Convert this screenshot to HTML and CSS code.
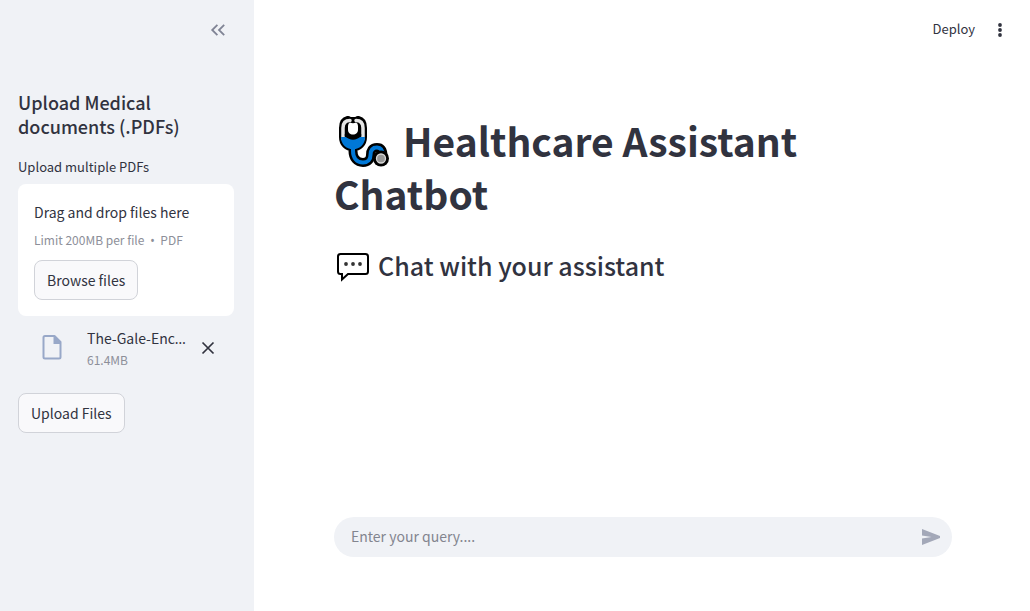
FILE: index.html
```html
<!DOCTYPE html>
<html lang="en">
<head>
<meta charset="utf-8">
<meta name="viewport" content="width=device-width, initial-scale=1">
<title>Healthcare Assistant Chatbot</title>
<link rel="stylesheet" href="styles.css">
</head>
<body>
<div class="app">
  <aside class="sidebar">
    <div class="sidebar-header">
      <button class="icon-button collapse" type="button" aria-label="Collapse sidebar">
        <svg width="16" height="14" viewBox="0 0 16 14" fill="none" stroke="currentColor" stroke-width="1.8"><path d="M7.4 1.8 2.200 7l5.200 5.200M14.200 1.800 9 7l5.200 5.200"/></svg>
      </button>
    </div>
    <h2 class="sidebar-title">Upload Medical documents (.PDFs)</h2>
    <label class="field-label" for="browse">Upload multiple PDFs</label>
    <section class="dropzone">
      <span class="drop-title">Drag and drop files here</span>
      <span class="drop-hint">Limit 200MB per file <span class="dot">•</span> PDF</span>
      <button class="button" id="browse" type="button">Browse files</button>
    </section>
    <div class="file">
      <svg class="file-icon" width="20" height="26" viewBox="0 0 20 26"><path fill="none" stroke="currentColor" stroke-width="2" stroke-linejoin="round" d="M3 2h9.500L18.500 8v15a1.500 1.500 0 0 1-1.500 1.500H3A1.500 1.500 0 0 1 1.500 23V3.500A1.500 1.500 0 0 1 3 2Z"/><path fill="currentColor" d="M11.500 2h1.500l6 6.500v1.500h-7.500Z"/></svg>
      <div class="file-info">
        <span class="file-name">The-Gale-Enc<span class="ellipsis">…</span></span>
        <span class="file-size">61.4MB</span>
      </div>
      <button class="icon-button remove" type="button" aria-label="Remove file">
        <svg width="14" height="14" viewBox="0 0 14 14" fill="none" stroke="currentColor" stroke-width="1.700"><path d="m1.500 1.500 11 11M12.500 1.500l-11 11"/></svg>
      </button>
    </div>
    <button class="button upload" type="button">Upload Files</button>
  </aside>
  <main class="main">
    <header class="toolbar">
      <button class="deploy" type="button">Deploy</button>
      <button class="icon-button menu" type="button" aria-label="Main menu">
        <svg width="4" height="14" viewBox="0 0 4 14" fill="currentColor"><circle cx="2" cy="2" r="1.900"/><circle cx="2" cy="7" r="1.900"/><circle cx="2" cy="12" r="1.900"/></svg>
      </button>
    </header>
    <div class="content">
      <h1 class="title"><svg class="stethoscope" width="52" height="52" viewBox="0 0 52 52" fill="none" stroke-linecap="round" stroke-linejoin="round">
        <path stroke="#000" stroke-width="9" d="M10 4.500Q5.500 5.500 5.500 12v9c0 6 4 10 9.500 10s9.500-4 9.500-10v-9q0-6.500-4.500-7.500M15 31v4c0 7 4 11.500 10 11.500 5 0 7.500-3 7.500-7.500 0-4 1.500-7.500 6.500-7.500s6 4 6 9"/>
        <path fill="#000" d="M8 1h14l4 20-11 9L4 21Z"/>
        <path stroke="#e6e6e6" stroke-width="3.500" d="M12 4.500Q5 4.500 5 12v11M18 4.500q7 0 7 7.500v11"/>
        <path stroke="#0078d7" stroke-width="4" stroke-linecap="butt" d="M5 21c0 6 4 10 10 10s10-4 10-10M15 31v4c0 7 4 11.500 10 11.500 5 0 7.500-3 7.500-7.500 0-4 1.500-7.500 6.500-7.500s6 4 6 9"/>
        <path fill="#0078d7" d="M5 21h20q0 10-10 10T5 21Z"/>
        <path fill="#000" d="M6.800 18h16.400v2q-8.200 7.500-16.400 0Z"/>
        <path fill="#fff" d="M12 6.500q3 1.500 6 0 2 .8 2 3.500v3.500c0 3.500-2 5-5 5s-5-1.500-5-5V10q0-2.700 2-3.500Z"/>
        <circle cx="43" cy="42.500" r="8" fill="#000"/><circle cx="43" cy="42.500" r="4.500" fill="#999" stroke="#d8d8d8" stroke-width="1.300"/>
      </svg>Healthcare Assistant Chatbot</h1>
      <h3 class="subtitle"><svg class="bubble" width="34" height="34" viewBox="0 -4 34 34"><path fill="#fff" stroke="#000" stroke-width="2" stroke-linejoin="miter" d="M4.500 2h25A2.500 2.500 0 0 1 32 4.500v15A2.500 2.500 0 0 1 29.500 22H12l-6 5.500V22H4.500A2.500 2.500 0 0 1 2 19.500v-15A2.500 2.500 0 0 1 4.500 2Z"/><g fill="#333"><circle cx="10" cy="12" r="1.900"/><circle cx="17" cy="12" r="1.900"/><circle cx="24" cy="12" r="1.900"/></g></svg>Chat with your assistant</h3>
    </div>
    <form class="chat">
      <input class="chat-input" type="text" placeholder="Enter your query...." aria-label="Enter your query">
      <button class="icon-button send" type="button" aria-label="Send">
        <svg width="18" height="16" viewBox="0 0 18 16" fill="currentColor"><path d="M0 0 18 7v2L0 16V9.500L9.500 8 0 6.500Z"/></svg>
      </button>
    </form>
  </main>
</div>
</body>
</html>
```

FILE: styles.css
```css
* {
  box-sizing: border-box;
}

body {
  margin: 0;
  color: #31333f;
  background: #fff;
  font: 400 14px/24px "Source Sans Pro", "Noto Sans CJK SC", sans-serif;
}

button,
input {
  font: inherit;
  color: inherit;
}

h1,
h2,
h3 {
  margin: 0;
}

.app {
  display: flex;
  min-height: 100vh;
}

.sidebar {
  flex: 0 0 254px;
  min-width: 0;
  padding: 18px 20px 18px 18px;
  background: #f0f2f6;
}

.sidebar-header {
  display: flex;
  justify-content: flex-end;
  height: 72px;
  padding-right: 8px;
}

.icon-button {
  display: flex;
  align-items: center;
  justify-content: center;
  padding: 0;
  border: 0;
  background: none;
  cursor: pointer;
}

.collapse {
  height: 24px;
  color: #808495;
}

.sidebar-title {
  margin-bottom: 17px;
  font-size: 18px;
  font-weight: 500;
  line-height: 24px;
}

.field-label {
  display: block;
  margin-bottom: 5px;
  font-size: 13px;
}

.dropzone {
  display: flex;
  flex-direction: column;
  align-items: flex-start;
  padding: 16px;
  border-radius: 8px;
  background: #fff;
}

.drop-hint,
.file-size {
  color: #8d8f99;
  font-size: 12px;
}

.drop-hint {
  margin: 4px 0 8px;
}

.dot,
.ellipsis {
  font-family: "Noto Sans", sans-serif;
  line-height: 1;
}

.dot {
  margin: 0 3px;
}

.button {
  height: 40px;
  padding: 0 12px;
  border: 1px solid #d1d3d9;
  border-radius: 8px;
  background: #f9f9fb;
  cursor: pointer;
}

.file {
  display: flex;
  align-items: center;
  padding: 10px 19px 0 24px;
}

.file-icon {
  flex: none;
  margin: 0 25px 3px 0;
  color: #98a8c8;
}

.file-info {
  display: flex;
  flex: 1;
  flex-direction: column;
  min-width: 0;
  margin-right: 4px;
}

.file-name {
  white-space: nowrap;
}

.file-size {
  line-height: 20px;
}

.upload {
  margin-top: 23px;
}

.main {
  display: flex;
  flex: 1;
  flex-direction: column;
  min-width: 0;
}

.toolbar {
  display: flex;
  align-items: center;
  justify-content: flex-end;
  gap: 16px;
  height: 60px;
  padding-right: 22px;
}

.deploy {
  padding: 0 1px 2px 0;
  border: 0;
  background: none;
  font-size: 13px;
  cursor: pointer;
}

.menu {
  width: 16px;
  height: 24px;
}

.content {
  flex: 1;
  padding: 54px 78px 24px 80px;
}

.title {
  margin-bottom: 28px;
  font-size: 39px;
  font-weight: 700;
  line-height: 53px;
}

.stethoscope {
  margin: 0 13px -2px 4px;
  vertical-align: -9px;
}

.subtitle {
  display: flex;
  align-items: center;
  gap: 8px;
  padding-left: 2px;
  font-size: 25px;
  font-weight: 500;
  line-height: 34px;
}

.chat {
  display: flex;
  align-items: center;
  margin: 0 78px 54px 80px;
  height: 40px;
  padding: 0 12px 0 17px;
  border-radius: 20px;
  background: #f0f2f6;
}

.chat-input {
  flex: 1;
  min-width: 0;
  padding: 0 0 2px;
  border: 0;
  outline: 0;
  background: none;
}

.chat-input::placeholder {
  color: #83858f;
  opacity: 1;
}

.send {
  color: #a3a8b8;
}
```
